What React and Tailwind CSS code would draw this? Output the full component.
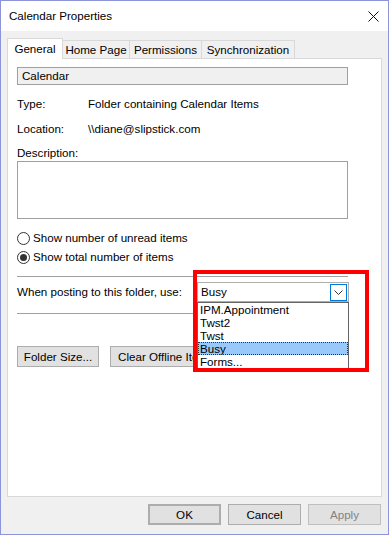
import { useState } from 'react'

const font = { fontFamily: '"Liberation Sans", Arial, sans-serif' }

function Radio({ checked, label }) {
  return (
    <div className="flex items-center h-[16px] gap-[3px]">
      <span className="w-[13px] h-[13px] rounded-full border border-[#333333] bg-white flex items-center justify-center">
        {checked && <span className="w-[7px] h-[7px] rounded-full bg-[#333333]" />}
      </span>
      <span>{label}</span>
    </div>
  )
}

function Button({ children, className = '' }) {
  return (
    <div className={`h-[21px] border border-[#adadad] bg-[#e1e1e1] flex items-center justify-center ${className}`}>
      {children}
    </div>
  )
}

export default function App() {
  const [tab] = useState('General')
  const tabs = [
    { name: 'General', w: 'w-[56px]' },
    { name: 'Home Page', w: 'w-[67px]' },
    { name: 'Permissions', w: 'w-[72px]' },
    { name: 'Synchronization', w: 'w-[93px]' },
  ]
  const options = ['IPM.Appointment', 'Twst2', 'Twst', 'Busy', 'Forms...']

  return (
    <div className="relative w-[390px] h-[535px] bg-white text-[11.6px] text-black leading-none" style={font}>
      <div className="w-[389px] h-[535px] border border-[#8e94d9] bg-[#f0f0f0] flex flex-col">
        {/* Title bar */}
        <div className="h-[30px] bg-white flex items-center justify-between pl-[8px] pr-[9px] shrink-0">
          <span>Calendar Properties</span>
          <svg width="11" height="11" viewBox="0 0 11 11">
            <path d="M0.5 0.5 L10.5 10.5 M10.5 0.5 L0.5 10.5" stroke="#111" strokeWidth="1" />
          </svg>
        </div>

        {/* Tabs */}
        <div className="flex items-end pl-[6px] mt-[7px] h-[20px] shrink-0">
          {tabs.map(({ name, w }) => name === tab ? (
            <div key={name} className={`${w} h-[21px] bg-white border border-b-0 border-[#d9d9d9] flex items-center justify-center relative z-10 -mb-px`}>
              {name}
            </div>
          ) : (
            <div key={name} className={`${w} h-[18px] bg-[#f0f0f0] border border-l-0 border-b-0 border-[#d9d9d9] flex items-center justify-center`}>
              {name}
            </div>
          ))}
        </div>

        {/* Panel */}
        <div className="ml-[6px] w-[375px] h-[439px] bg-white border border-[#d9d9d9] pl-[9px] pt-[8px] shrink-0">
          <div className="w-[331px] h-[18px] border border-[#a0a0a0] bg-[#f0f0f0] flex items-center pl-[4px]">Calendar</div>

          <div className="flex items-center h-[16px] mt-[11px]">
            <span className="w-[71px]">Type:</span>
            <span>Folder containing Calendar Items</span>
          </div>
          <div className="flex items-center h-[16px] mt-[9px]">
            <span className="w-[71px]">Location:</span>
            <span>\\diane@slipstick.com</span>
          </div>
          <div className="flex items-center h-[16px] mt-[8px]">Description:</div>
          <div className="w-[331px] h-[58px] border border-[#a0a0a0] bg-white" />

          <div className="mt-[11px]">
            <Radio label="Show number of unread items" />
          </div>
          <div className="mt-[3px]">
            <Radio checked label="Show total number of items" />
          </div>

          <div className="w-[331px] h-px bg-[#a0a0a0] mt-[11px]" />

          <div className="flex items-center mt-[5px] h-[20px]">
            <span className="w-[180px]">When posting to this folder, use:</span>
            <div className="relative">
              <div className="w-[152px] h-[20px] border border-[#adadad] bg-white flex items-center justify-between pl-[3px] pr-px">
                <span>Busy</span>
                <span className="w-[17px] h-[17px] border border-[#0078d7] flex items-center justify-center">
                  <svg width="9" height="5" viewBox="0 0 9 5">
                    <path d="M0.5 0.5 L4.5 4.5 L8.5 0.5" stroke="#333" fill="none" strokeWidth="1" />
                  </svg>
                </span>
              </div>
              {/* Open list */}
              <div className="absolute left-0 top-[20px] w-[152px] border border-[#646464] bg-white z-20 flex flex-col">
                {options.map(o => (
                  <div
                    key={o}
                    className={`h-[13px] leading-[13px] pl-[2px] overflow-hidden ${o === 'Busy' ? 'bg-[#99c9fa] outline outline-1 outline-dotted outline-[#333] -outline-offset-1' : ''}`}
                  >
                    {o}
                  </div>
                ))}
              </div>
            </div>
          </div>

          <div className="w-[331px] h-px bg-[#a0a0a0] mt-[11px]" />

          <div className="flex gap-[11px] mt-[32px]">
            <Button className="w-[82px]">Folder Size...</Button>
            <Button className="w-[112px]">Clear Offline Items</Button>
          </div>
        </div>

        {/* Bottom buttons */}
        <div className="flex justify-end gap-[7px] pr-[7px] mt-[7px]">
          <Button className="w-[73px] border-2 border-[#0078d7]">OK</Button>
          <Button className="w-[73px]">Cancel</Button>
          <Button className="w-[73px] border-[#bfbfbf] bg-[#cccccc] text-[#838383]">Apply</Button>
        </div>
      </div>

      {/* Annotation */}
      <div className="absolute left-[193px] top-[270px] w-[176px] h-[102px] border-4 border-[#ff0000] z-30 pointer-events-none" />
    </div>
  )
}
